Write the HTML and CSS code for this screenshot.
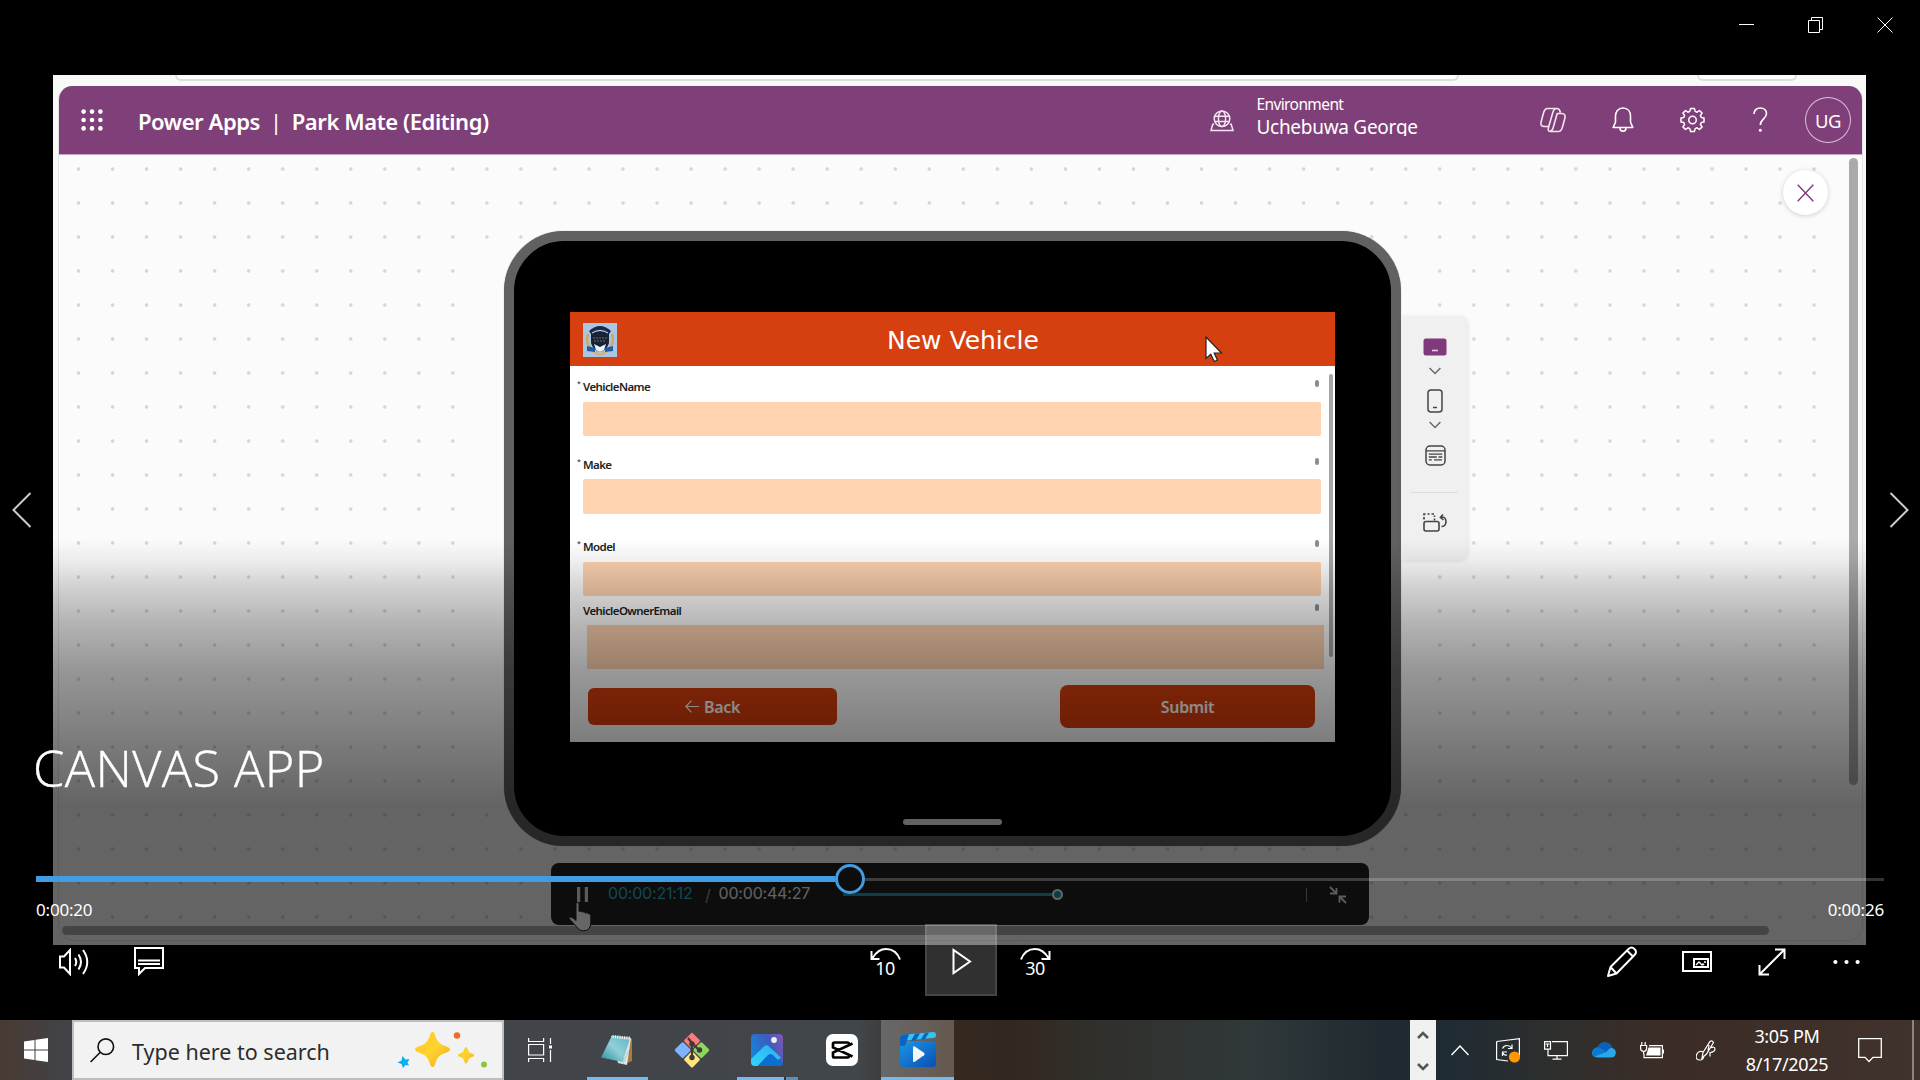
FILE: index.html
```html
<!DOCTYPE html>
<html lang="en">
<head>
<meta charset="utf-8">
<title>Canvas App</title>
<link rel="stylesheet" href="styles.css">
</head>
<body>
<main class="player">
  <section class="video">
    <div class="tabstrip"><span class="tab tab-wide"></span><span class="tab tab-small"></span></div>
    <div class="studio">
      <header class="suite">
        <svg class="waffle" width="22" height="22" viewBox="0 0 22 22" fill="#fff"><circle cx="2.6" cy="2.6" r="2.3"/><circle cx="11" cy="2.6" r="2.3"/><circle cx="19.4" cy="2.6" r="2.3"/><circle cx="2.6" cy="11" r="2.3"/><circle cx="11" cy="11" r="2.3"/><circle cx="19.4" cy="11" r="2.3"/><circle cx="2.6" cy="19.4" r="2.3"/><circle cx="11" cy="19.4" r="2.3"/><circle cx="19.4" cy="19.4" r="2.3"/></svg>
        <div class="brand"><span>Power Apps</span><span class="bar">|</span><span class="file">Park Mate (Editing)</span></div>
        <svg class="globe" width="24" height="22" viewBox="0 0 24 22" fill="none" stroke="#f3e6f1" stroke-width="1.5"><circle cx="12" cy="8.8" r="7.8"/><ellipse cx="12" cy="8.8" rx="3.6" ry="7.8"/><path d="M5 6.2h14M5 11.6h14M4.2 14.2H2.8L1 20.6h22l-1.8-6.4h-1.4"/></svg>
        <div class="env"><span class="env-label">Environment</span><span class="env-name">Uchebuwa George</span></div>
        <nav class="suite-icons">
          <svg width="70" height="30" viewBox="-22 -2 70 30" fill="none" stroke="#f3e6f1" stroke-width="1.6" stroke-linejoin="round"><path d="M7.500 1.500h9.500c2.500 0 2.800 1.500 3.500 4M7.500 1.500C5 1.500 4.200 3.500 3.500 6L1.200 14.500c-.9 3.500.3 5 3 5h4.600L12.800 5.500c.7-2.500 1.700-4 4.200-4M8.800 19.500l-.4 1.500c-.6 2.300.2 3.500 2.100 3.500h8c2.500 0 3.300-2 4-4.500l2.300-8.500c.9-3.500-.3-5-3-5h-4.600l-4 14c-.7 2.500-1.700 4-4.200 4"/></svg>
          <svg width="70" height="30" viewBox="-24 -2 70 30" fill="none" stroke="#fff" stroke-width="1.6" stroke-linejoin="round"><path d="M11 1C6 1 3.500 4.800 3.500 9v6L1.200 20.500h19.600L18.500 15V9c0-4.200-2.500-8-7.500-8zM8 21c0 2 1.200 3.200 3 3.200s3-1.200 3-3.200"/></svg>
          <svg width="69" height="30" viewBox="-34.500 -15 69 30" fill="none" stroke="#fff" stroke-width="1.5" stroke-linejoin="round"><path d="M-1.900-11.500h3.800L2.700-8.600 4.600-7.800 7-9.500 9.600-6.900 7.900-4.500 8.700-2.600 11.500-1.900v3.800L8.700 2.600 7.900 4.500 9.600 6.900 7 9.500 4.600 7.800 2.700 8.600 1.900 11.500h-3.800L-2.700 8.600-4.600 7.800-7 9.500-9.600 6.900-7.900 4.500-8.700 2.600-11.500 1.900v-3.800L-8.700-2.600-7.900-4.500-9.600-6.900-7-9.500-4.600-7.800-2.700-8.600z"/><circle r="3.800"/></svg>
          <svg width="68" height="30" viewBox="-26 -2 68 30" fill="none" stroke="#fff" stroke-width="1.700"><path d="M1 7c0-3.500 2.500-6 6.300-6s6.200 2.300 6.200 5.600c0 5.200-6.200 5.400-6.200 11.400"/><circle cx="7.300" cy="23.300" r=".7"/></svg>
        </nav>
        <span class="avatar">UG</span>
      </header>
      <div class="canvas">
        <div class="tablet">
          <div class="screen">
            <div class="form-head">
              <svg class="crest" width="34" height="34" viewBox="0 0 34 34"><rect width="34" height="34" fill="#a9c6e4"/><path d="M5 11q-3 9 4 16M29 11q3 9-4 16" stroke="#cfa85a" stroke-width="2.400" fill="none"/><path d="M9 28l8 4 8-4" stroke="#d9b365" stroke-width="2" fill="none"/><path d="M6 8Q17-2 28 8l-2 3H8z" fill="#1c2b4d"/><path d="M8 11q9-4 18 0v9q-2 7-9 9-7-2-9-9z" fill="#16243a"/><path d="M9 10q8-5 16 0" stroke="#dfe6ef" fill="none"/><path d="M10 15h14M11 18h12" stroke="#7d6c42" stroke-dasharray="2 1"/><path d="M4 23l8 2v4l-8-1zM30 23l-8 2v4l8-1z" fill="#1f5ca6"/><path d="M11 21l6 3 6-3-2 6-4 2-4-2z" fill="#edf2f7"/></svg>
              <h1>New Vehicle</h1>
            </div>
            <div class="form-body">
              <div class="rows">
                <div class="label"><i>*</i><span>VehicleName</span><b></b></div><div class="field"></div>
                <div class="label l2"><i>*</i><span>Make</span><b></b></div><div class="field f2"></div>
                <div class="label l3"><i>*</i><span>Model</span><b></b></div><div class="field"></div>
                <div class="label l4"><i></i><span>VehicleOwnerEmail</span><b></b></div><div class="field f4"></div>
                <div class="actions">
                  <div class="btn back"><svg width="14" height="13" viewBox="0 0 14 13" fill="none" stroke="#fff" stroke-width="1.100"><path d="M14 6.500H1M6.500.7L.8 6.500l5.700 5.800"/></svg><span>Back</span></div>
                  <div class="btn submit"><span>Submit</span></div>
                </div>
              </div>
              <div class="form-scroll"></div>
            </div>
          </div>
          <div class="homebar"></div>
        </div>
        <aside class="devices">
          <svg width="24" height="18" viewBox="0 0 24 18"><rect x=".5" y=".5" width="23" height="17" rx="2.500" fill="#80397b"/><path d="M9 12.500h6" stroke="#e8cfe5" stroke-width="1.600"/></svg>
          <svg class="chev" width="12" height="8" viewBox="0 0 12 8" fill="none" stroke="#666" stroke-width="1.400"><path d="M.6 1 6 6.500 11.400 1"/></svg>
          <svg class="phone" width="16" height="24" viewBox="0 0 16 24" fill="none" stroke="#444" stroke-width="1.500"><rect x="1" y="1" width="14" height="22" rx="3"/><path d="M6 18.500h4"/></svg>
          <svg class="chev" width="12" height="8" viewBox="0 0 12 8" fill="none" stroke="#666" stroke-width="1.400"><path d="M.6 1 6 6.500 11.400 1"/></svg>
          <svg class="formicon" width="21" height="21" viewBox="0 0 21 21" fill="none" stroke="#444" stroke-width="1.500"><rect x="1" y="1" width="19" height="19" rx="4"/><path d="M1 5.800h19M3.800 9.200h13.500M3.800 12h8M13.500 12h3.800M3.800 14.800h3M9 14.800h8" stroke-width="1.300"/></svg>
          <hr>
          <svg class="rotate" width="24" height="19" viewBox="0 0 24 19" fill="none" stroke="#444" stroke-width="1.600"><rect x="1" y="8.500" width="15" height="9.500" rx="2"/><path d="M1 6.500V4M1 2.500V1h1.500M4.500 1h2M8.500 1H11M11.500 2.500v1.500M11.500 5.500v2"/><path d="M18 4.500c3.500-1 5 1 5 4s-2 5-4.500 5M20 1.500l-2.600 3 3 2.500"/></svg>
        </aside>
        <div class="close-preview"><svg width="17" height="18" viewBox="0 0 17 18" fill="none" stroke="#80397b" stroke-width="1.400"><path d="M.7.7l15.600 16.600M16.300.7.700 17.300"/></svg></div>
        <div class="vscroll"></div>
        <div class="hscroll"></div>
        <div class="recorder">
          <svg class="pause" width="11" height="15" viewBox="0 0 11 15" fill="#e4e4e4"><path d="M0 0h3.200v15H0zM7.800 0H11v15H7.800z"/></svg>
          <span class="rec-now">00:00:21:12</span><span class="rec-slash">/</span><span class="rec-total">00:00:44:27</span>
          <div class="rec-track"></div><i class="rec-knob"></i>
          <div class="rec-divider"></div>
          <svg class="rec-shrink" width="18" height="18" viewBox="0 0 18 18" fill="none" stroke="#e8e8e8" stroke-width="1.800"><path d="M1 1l6 6M7.500 2v5.500H1M17 17l-6-6M10.500 16.500v-6H17"/></svg>
        </div>
        <svg class="arrow-cursor" width="18" height="27" viewBox="0 0 18 27"><path d="M1 1v21.500l4.800-4.300 3.400 7.300 3.200-1.500-3.200-7H16.500z" fill="#fff" stroke="#222" stroke-width="1.200"/></svg>
        <svg class="hand-cursor" width="24" height="31" viewBox="0 0 24 31"><path d="M8 2q2-1.500 3 .5v8q2-1.500 3.200.6 2-1 3.200.9 2-.9 3.200.8 2-.3 2.200 1.700v7q0 8-7.500 8.500-4 0-6.500-4L1 17.500q1-2.500 4-.5l3 2.500z" fill="#fff" stroke="#222" stroke-width="1"/></svg>
      </div>
    </div>
  </section>

  <section class="overlay">
    <div class="window-controls">
      <svg width="69" height="16" viewBox="-27 0 69 16" stroke="#fff" fill="none"><path d="M0 7.500h15"/></svg>
      <svg width="69" height="16" viewBox="-27 0 69 16" stroke="#fff" fill="none"><path d="M.5 3.500h11v12H.5zM3.500 3.500v-3h11v12h-3"/></svg>
      <svg width="69" height="16" viewBox="-27 0 69 16" stroke="#fff" fill="none"><path d="M.5.5l15 15M15.500.5l-15 15"/></svg>
    </div>
    <div class="flip">
      <svg width="20" height="36" viewBox="0 0 20 36" fill="none" stroke="#ccc" stroke-width="2"><path d="M18.500 1 1.500 18l17 17"/></svg>
      <svg width="20" height="36" viewBox="0 0 20 36" fill="none" stroke="#ccc" stroke-width="2"><path d="M1.500 1l17 17-17 17"/></svg>
    </div>
    <h2 class="title">CANVAS APP</h2>
    <div class="seek"><div class="seek-done"></div><i class="thumb"></i><div class="seek-left"></div></div>
    <div class="times"><span>0:00:20</span><span>0:00:26</span></div>
    <div class="controls">
      <div class="group">
        <span><svg width="32" height="28" viewBox="0 0 32 28" fill="none" stroke="#fff" stroke-width="2"><path d="M2 8.500h4L12 2v24l-6-6.500H2z"/><path d="M17 10q2.500 4 0 8M20.500 6.500q5 7.500 0 15M25 2q8.500 12 0 24"/></svg></span>
        <span><svg width="30" height="29" viewBox="0 0 30 29" fill="none" stroke="#fff" stroke-width="2"><path d="M1 1h28v20H11l-6 6v-6H1zM4 13.500h22M4 17h22"/></svg></span>
      </div>
      <div class="group">
        <span class="skip"><svg width="31" height="13" viewBox="0 0 31 13" fill="none" stroke="#fff" stroke-width="2"><path d="M1.500 3v8h8M2.500 10Q8 1 16 1q10 0 14 10.500"/></svg><em>10</em></span>
        <span class="play"><svg width="20" height="27" viewBox="0 0 20 27" fill="none" stroke="#fff" stroke-width="2"><path d="M1.500 2v23L18 13.500z"/></svg></span>
        <span class="skip"><svg width="31" height="13" viewBox="0 0 31 13" fill="none" stroke="#fff" stroke-width="2"><path d="M29.500 3v8h-8M28.500 10Q23 1 15 1 5 1 1 11.500"/></svg><em>30</em></span>
      </div>
      <div class="group right">
        <span><svg width="30" height="31" viewBox="0 0 30 31" fill="none" stroke="#fff" stroke-width="2" stroke-linejoin="round"><path d="M1 30l2.500-9L21.500 3q3-3 6 0t0 6L9.500 27.500zM3.500 21l6 6.500M20 4.500l6 6"/></svg></span>
        <span><svg width="30" height="21" viewBox="0 0 30 21" fill="none" stroke="#fff" stroke-width="2"><path d="M1 1h28v19H1zM12 8h14v8H12z"/><path d="M14 14l3-3 3 3 1-1 1 1M22 11h2" stroke-width="1.300"/></svg></span>
        <span><svg width="28" height="28" viewBox="0 0 28 28" fill="none" stroke="#fff" stroke-width="2"><path d="M1.500 26.500l25-25M17 1.500h9.500V11M1.500 17v9.500H11"/></svg></span>
        <span><svg width="27" height="6" viewBox="0 0 27 6" fill="#fff"><circle cx="2.400" cy="3" r="2.100"/><circle cx="13.500" cy="3" r="2.100"/><circle cx="24.600" cy="3" r="2.100"/></svg></span>
      </div>
    </div>
  </section>
</main>

<footer class="taskbar">
  <div class="start"><svg width="24" height="24" viewBox="0 0 24 24" fill="#fff"><path d="M0 3.400 10.500 1.900v9.600H0zM11.500 1.700 24 0v11.500H11.500zM0 12.500h10.500v9.600L0 20.600zM11.500 12.500H24V24l-12.500-1.700z"/></svg></div>
  <div class="search">
    <svg width="25" height="25" viewBox="0 0 25 25" fill="none" stroke="#111" stroke-width="1.600"><circle cx="15.800" cy="8.700" r="7.800"/><path d="M10.300 14.300.600 24"/></svg>
    <span>Type here to search</span>
    <svg class="stars" width="90" height="40" viewBox="0 0 90 40"><defs><linearGradient id="gold" x1="0" y1="0" x2="1" y2="1"><stop offset="0" stop-color="#ffc51c"/><stop offset=".5" stop-color="#ffd430"/><stop offset="1" stop-color="#f0a818"/></linearGradient></defs><path d="M35.500 2q2 0 3 4.500 2 7 8.500 9 6 2 6 4t-6 4q-6.500 2-8.500 9-1 4.500-3 4.500t-3-4.500q-2-7-8.500-9-6-2-6-4t6-4q6.500-2 8.500-9 1-4.500 3-4.500z" fill="url(#gold)"/><path d="M69 17q1.200 0 2 3 .6 2.500 3 3.300 3.200.7 3.200 2t-3.200 2q-2.400.7-3 3.300-.8 3-2 3t-2-3q-.6-2.600-3-3.300-3.200-.700-3.200-2t3.200-2q2.400-.8 3-3.300.8-3 2-3z" fill="url(#gold)"/><circle cx="60" cy="5.500" r="3.200" fill="#f4682a"/><circle cx="87" cy="34.500" r="3" fill="#8cc63f"/><path d="M5.500 26l3 3.500 4-.5-2 3.500 1.500 3-3.500-.5L6 38l-1.500-4L.500 32.500l4-2z" fill="#0ab0f2"/></svg>
  </div>
  <div class="apps">
    <div class="app taskview"><svg width="24" height="24" viewBox="0 0 24 24" fill="none" stroke="#fff" stroke-width="1.200"><path d="M.6 0v3.500h15V0M.6 6.500h15v10.500H.6zM.6 24v-3.500h15V24M22.500 0v6M22.500 12v12"/><path d="M21 7.500h3v3h-3z" fill="#fff" stroke="none"/></svg></div>
    <div class="app open"><svg width="34" height="32" viewBox="0 0 34 32"><defs><linearGradient id="pad" x1="0" y1="1" x2="1" y2="0"><stop offset="0" stop-color="#2a8a98"/><stop offset=".5" stop-color="#8fd0d9"/><stop offset="1" stop-color="#5fb4c2"/></linearGradient></defs><path d="M29 4l3 1v22l-5 2z" fill="#a97d35"/><path d="M11 2l20 2-4 27-9-2z" fill="#dfe9ec"/><path d="M12 1.500 30 3.500 23 28 1 23.500z" fill="url(#pad)"/><path d="M12.500 2.500l18 1.800" stroke="#eee" stroke-width="3" stroke-dasharray="1.300 1"/><path d="M20 29l9-21M23 30l6-14" stroke="#9fb4ba" stroke-width=".7"/></svg></div>
    <div class="app"><svg width="36" height="36" viewBox="0 0 36 36"><g transform="rotate(45 18 18)"><rect x="5.500" y="5.500" width="12" height="12" rx="1.500" fill="#ff7b79"/><rect x="18.700" y="5.500" width="12" height="12" rx="1.500" fill="#8fd65c"/><rect x="5.500" y="18.700" width="12" height="12" rx="1.500" fill="#80b3ff"/><rect x="18.700" y="18.700" width="12" height="12" rx="1.500" fill="#ffe680"/></g><path d="M14 6l4 5v14M18 11l7 7" stroke="#41393a" stroke-width="2.200" fill="none"/><g fill="#41393a"><circle cx="18" cy="12" r="2.700"/><circle cx="25.500" cy="18" r="2.700"/><circle cx="18" cy="25.500" r="2.700"/></g></svg></div>
    <div class="app open two"><svg width="32" height="32" viewBox="0 0 32 32"><defs><linearGradient id="sky" x1="0" y1=".6" x2="1" y2=".2"><stop offset="0" stop-color="#1683dd"/><stop offset=".6" stop-color="#3c5dbb"/><stop offset="1" stop-color="#7b56b5"/></linearGradient><linearGradient id="hill" x1="0" y1="1" x2="1" y2="0"><stop offset="0" stop-color="#35d4fb"/><stop offset="1" stop-color="#2ab0f3"/></linearGradient></defs><rect width="32" height="32" rx="4" fill="url(#sky)"/><circle cx="23" cy="6" r="2.900" fill="#eee"/><path d="M5 32 17 20q2.500-2.300 5 0l10 9q-.5 3-4 3z" fill="#0b6fd0"/><path d="M0 25 13 12.500q2.500-2.300 5 0L30 23.500l-3 2.500-5-5q-2.500-2-5 0L6.500 32H4q-4 0-4-4z" fill="url(#hill)"/></svg></div>
    <div class="app"><svg width="32" height="32" viewBox="0 0 32 32"><rect width="32" height="32" rx="7" fill="#fff"/><path d="M26.500 9.500 7 18.500V22q0 1.500 1.500 1.500h13Q23 23.500 23.500 21M26.500 22.500 7 13.500V10q0-1.500 1.500-1.500h13Q23 8.500 23.500 11" fill="none" stroke="#000" stroke-width="2.700"/></svg></div>
    <div class="app open active"><svg width="36" height="36" viewBox="0 0 36 36"><defs><linearGradient id="film" x1="0" y1="0" x2="1" y2="1"><stop offset="0" stop-color="#1c96e6"/><stop offset="1" stop-color="#0850b4"/></linearGradient></defs><path d="M0 6q0-3 3-3.300L33 0q3 0 3 3t-3 3L6 8.500 4 15H0z" fill="#34c3f3"/><path d="M0 6q0-3 3-3.300l6-.6L5 14.500H0zM15 1.700l5-.5-4 7-5 .5zM25 .8l4-.4-4 6.500-4 .4z" fill="#0b62c0"/><path d="M0 13q1 2 4.500 1.500L7 9h26q3 0 3 3v20q0 3-3 3H3q-3 0-3-3z" fill="url(#film)"/><path d="M13 15.500q0-2 1.800-1L24 20.800q1.500 1.200 0 2.400l-9.200 6.500q-1.800 1-1.800-1z" fill="#f5f5f5"/></svg></div>
  </div>
  <div class="spinner"><svg width="12" height="10" viewBox="0 0 12 10" fill="none" stroke="#555" stroke-width="2.600"><path d="M1 8l5-5 5 5"/></svg><svg width="12" height="10" viewBox="0 0 12 10" fill="none" stroke="#555" stroke-width="2.600"><path d="M1 2l5 5 5-5"/></svg></div>
  <div class="tray">
    <span><svg width="18" height="11" viewBox="0 0 18 11" fill="none" stroke="#fff" stroke-width="1.400"><path d="M.5 10 9 1l8.500 9"/></svg></span>
    <span><svg width="24" height="25" viewBox="0 0 24 25" fill="none" stroke="#fff" stroke-width="1.200"><path d="M.6 3.500 23.400.700v17.500M.6 3.500v18L12 23M6.500 10.500Q8 7.500 11 7.500q3 0 4.500 2.500M16 6.500v4h-4M11 14H6.500v4M6.500 14.500Q8 18 11 17"/><circle cx="18.500" cy="19" r="5.600" fill="#ff9800" stroke="none"/></svg></span>
    <span><svg width="24" height="19" viewBox="0 0 24 19" fill="none" stroke="#fff" stroke-width="1.200"><path d="M8 .600h15.400v14H4V8.500M.600.600H6.500v7.500H.600zM3.500 3v3M1.500 3h4M13 14.600V18M8.500 18.200h9"/></svg></span>
    <span><svg width="24" height="16" viewBox="0 0 24 16"><path d="M5.500 15.500Q0 15 .2 10.500.8 6 5.500 5.500 8 .300 13 .5q5.500.300 7 5.500Q24 7 23.800 11q-.5 4.500-5 4.500z" fill="#28a8ea"/><path d="M.2 10.500Q.8 6 5.500 5.500q3 0 5 2l4 2.500L2.500 14.500Q.2 13 .2 10.500z" fill="#0f78d0"/><path d="M5.500 5.500Q8 .300 13 .5q5.500.300 7 5.500-3-.3-5.500 4L10 7.200q-2-1.700-4.500-1.700z" fill="#0a5fb8"/></svg></span>
    <span><svg width="24" height="17" viewBox="0 0 24 17" fill="none" stroke="#fff" stroke-width="1.200"><path d="M9 3.600h13.400v12H4v-4M23.500 7.500v4M1.800 0v3M5.200 0v3M.6 3.500h6v3q0 2.500-3 3-3-.5-3-3zM3.600 9.500V12"/><path d="M8.500 5.500h12v8H6z" fill="#fff" stroke="none"/></svg></span>
    <span class="pen"><svg width="20" height="21" viewBox="0 0 20 21" fill="none" stroke="#fff" stroke-width="1.200"><path d="M6 18 7 12.500 14 1.500q2-1.500 3.500 1L10.500 14zM8 12q-6-2-7.500 3T4 20q3.500 0 4-4.500M13 5l-1 5.500M14 8q5-2 5 1t-5 3.500v4"/></svg></span>
    <div class="clock"><span class="t">3:05 PM</span><span class="d">8/17/2025</span></div>
    <span class="notif"><svg width="24" height="25" viewBox="0 0 24 25" fill="none" stroke="#fff" stroke-width="1.300"><path d="M.700.700h22.600v18.600H15L11 23.500 7 19.300H.700z"/></svg></span>
    <i class="peek"></i>
  </div>
</footer>
</body>
</html>
```
FILE: styles.css
```css
* { box-sizing: border-box; }
body { margin: 0; width: 1920px; height: 1080px; overflow: hidden; background: #000; color: #fff; font-family: "Noto Sans", "Open Sans", sans-serif; }
svg { display: block; flex: none; }
span, h1, h2 { white-space: nowrap; }
h1, h2 { margin: 0; font-weight: 400; }

/* video frame */
.player { position: relative; height: 1020px; padding: 75px 54px 0 53px; background: #000; }
.video { height: 870px; background: #f9f9f8; overflow: hidden; }
.tabstrip { height: 11px; display: flex; }
.tab { height: 6px; border: 2px solid #dcdfdd; border-top: 0; border-radius: 0 0 14px 14px; background: #fff; }
.tab-wide { width: 1284px; margin-left: 122px; }
.tab-small { width: 100px; margin-left: 238px; }
.studio { height: 855px; margin: 0 3px 0 5px; border: solid #e4e4e4; border-width: 0 1px 1px; border-radius: 14px 14px 16px 16px; overflow: hidden; background: #fbfbfb; }

.suite { height: 69px; background: #7f3f78; border-bottom: 1px solid #c9a5c6; display: flex; align-items: center; padding-right: 11px; }
.waffle { margin-left: 22px; }
.brand { width: 1074px; margin-left: 35px; display: flex; font-size: 22px; font-weight: 600; line-height: 30px; letter-spacing: -.42px; padding-top: 2px; }
.bar { margin: 0 10px; font-weight: 400; }
.globe { margin-bottom: -1px; }
.env { width: 262px; margin-left: 22px; display: flex; flex-direction: column; }
.env-label { font-size: 15.500px; line-height: 22px; letter-spacing: -.6px; }
.env-name { font-size: 19px; line-height: 24px; height: 21px; overflow: hidden; letter-spacing: -.28px; margin-bottom: 11px; }
.suite-icons { display: flex; margin-left: auto; }
.avatar { width: 46px; height: 46px; margin-left: 10px; border: 1.500px solid #dcbfd9; border-radius: 50%; text-align: center; line-height: 45px; font-size: 18.500px; letter-spacing: -.5px; }

/* dot grid, left blank beside the device and along the right edge */
.canvas { position: relative; height: 786px; display: flex; align-items: flex-start; padding: 76px 0 0 445px; background: linear-gradient(#fbfbfb, #fbfbfb) right top / 28px 100% no-repeat, linear-gradient(#fbfbfb, #fbfbfb) 411px 96px / 950px 550px no-repeat, radial-gradient(circle, #d6d6d6 1.300px, transparent 2.200px) 2.500px -3px / 34.040px 34px; }
.tablet { width: 897px; height: 615px; flex: none; border: 10px solid #616161; border-radius: 60px; background: #000; padding: 71px 0 0 56px; box-shadow: 0 0 1px #888; }
.screen { width: 765px; height: 430px; background: #fff; color: #222; }
.form-head { height: 54px; background: #d64011; display: flex; align-items: center; padding: 1px 0 0 13px; }
.form-head h1 { margin-left: 270px; padding-top: 1px; font-family: "DejaVu Sans", sans-serif; font-size: 25px; letter-spacing: 0; color: #fff; }
.form-body { display: flex; align-items: flex-start; }
.rows { width: 759px; padding: 11px 0 0 13px; }
.label { height: 18px; display: flex; align-items: flex-start; font-size: 11.500px; font-weight: 600; line-height: 19px; letter-spacing: -.6px; }
.label i { width: 6px; margin-left: -6px; font-size: 7px; line-height: 14px; font-style: normal; font-weight: 400; }
.label b { width: 4px; height: 7px; margin: 3px 10px 0 auto; border-radius: 2px; background: #8d8d8d; }
.field { width: 738px; height: 34px; margin-top: 7px; border-radius: 2px; background: #ffd3b0; }
.l2 { margin-top: 19px; }
.f2 { height: 35px; margin-top: 6px; }
.l3 { margin-top: 23px; }
.l4 { margin-top: 5px; }
.f4 { height: 44px; width: 737px; margin: 6px 0 0 4px; border-radius: 0; }
.actions { display: flex; align-items: center; justify-content: space-between; width: 727px; height: 43px; margin: 16px 0 0 5px; }
.btn { display: flex; align-items: center; justify-content: center; gap: 5px; color: #fff; background: #d63d0c; font-size: 16px; font-weight: 600; letter-spacing: -.35px; }
.btn span { padding-top: 1px; }
.back { width: 249px; height: 37px; border-radius: 6px; margin-bottom: 1px; }
.submit { width: 255px; height: 43px; border-radius: 8px; }
.form-scroll { width: 4px; height: 283px; margin-top: 8px; border-radius: 2px; background: #a6a6a6; }
.homebar { width: 99px; height: 6px; margin: 77px 0 0 333px; border-radius: 3px; background: #f5f5f5; }

.devices { width: 66px; height: 244px; margin-top: 85px; padding-top: 22px; border-radius: 0 8px 8px 0; background: #f0f0f0; box-shadow: 1px 1px 4px rgba(0,0,0,.1); display: flex; flex-direction: column; align-items: center; }
.devices > svg { margin-left: 2px; }
.devices .chev { margin-top: 11px; }
.devices .phone { margin-top: 14px; }
.devices .phone + .chev { margin-top: 8px; }
.devices .formicon { margin-top: 16px; }
.devices hr { width: 47px; height: 1px; margin: 26px 0 0; border: 0; background: #ddd; }
.devices .rotate { margin-top: 20px; }

/* items floating over the design canvas */
.close-preview { position: absolute; left: 1724px; top: 15px; width: 45px; height: 45px; border-radius: 50%; background: #fff; box-shadow: 0 1px 5px rgba(0,0,0,.18); display: grid; place-items: center; }
.vscroll { position: absolute; left: 1790px; top: 3px; width: 9px; height: 627px; border-radius: 5px; background: #aaa; }
.hscroll { position: absolute; left: 3px; top: 771px; width: 1707px; height: 9px; border-radius: 5px; background: #aaa; }
.recorder { position: absolute; left: 492px; top: 708px; width: 818px; height: 62px; border-radius: 8px; background: #202121; display: flex; align-items: center; padding: 1px 22px 0 26px; font-family: Inter, sans-serif; font-size: 16px; letter-spacing: -.2px; }
.recorder > * { flex: none; }
.rec-now { width: 84px; margin-left: 20px; color: #24b6cd; margin-top: -3px; }
.rec-slash { margin-left: 13px; color: #999; }
.rec-total { width: 90px; margin-left: 8px; color: #f4f4f4; margin-top: -3px; }
.rec-track { width: 209px; height: 3px; margin-left: 34px; background: #1c9fb6; }
.rec-knob { width: 11px; height: 11px; border: 2.500px solid #fff; border-radius: 50%; background: #1a9ab0; }
.rec-divider { width: 1px; height: 14px; margin-left: auto; background: #888; }
.rec-shrink { margin-left: 22px; }
.arrow-cursor { position: absolute; left: 1146px; top: 181px; }
.hand-cursor { position: absolute; left: 509px; top: 746px; }

/* player overlay */
.overlay { position: absolute; inset: 0; display: flex; flex-direction: column; background: linear-gradient(transparent 538px, rgba(0,0,0,.06) 560px, rgba(0,0,0,.18) 590px, rgba(0,0,0,.29) 625px, rgba(0,0,0,.4) 669px, rgba(0,0,0,.51) 742px, rgba(0,0,0,.6) 805px); }
.window-controls { height: 48px; padding: 17px 1px 0 0; display: flex; justify-content: flex-end; }
.window-controls svg { width: 69px; }
.flip { height: 36px; margin: 444px 11px 0 12px; display: flex; justify-content: space-between; }
.title { margin: 210px 0 0 33px; font-family: "Open Sans", "Noto Sans", sans-serif; font-size: 50.500px; line-height: 60px; font-weight: 300; letter-spacing: .4px; -webkit-text-stroke: .4px #fff; }
.seek { height: 30px; margin: 66px 36px 0; display: flex; align-items: center; }
.seek-done { width: 799px; height: 6px; background: #429ce3; }
.thumb { width: 30px; height: 30px; border: 3px solid #429ce3; border-radius: 50%; }
.seek-left { flex: 1; height: 3px; background: rgba(255,255,255,.2); }
.times { height: 30px; padding: 1px 36px 0; display: flex; justify-content: space-between; font-size: 17px; line-height: 30px; letter-spacing: -.2px; }
.controls { height: 72px; padding: 0 36px; display: grid; grid-template-columns: 1fr 225px 1fr; }
.group { height: 72px; display: flex; align-items: center; }
.group > span { width: 75px; height: 72px; padding-top: 3px; flex: none; display: flex; flex-direction: column; align-items: center; justify-content: center; }
.group.right { justify-content: flex-end; }
.group > .play { width: 72px; margin: 0 1px 0 2px; padding: 3px 0 0 2px; background: rgba(255,255,255,.19); border: 2px solid rgba(255,255,255,.1); }
.skip em { font-style: normal; font-size: 18px; line-height: 14px; height: 14px; letter-spacing: -.5px; }

/* taskbar */
.taskbar { height: 60px; display: flex; background: linear-gradient(90deg, #483a33 0, #41444a 75px, #41464a 860px, #35291f 930px, #33281f 1010px, #30302c 1100px, #30383a 1250px, #1f2a30 1385px, #1f2b33 1450px, #2f2f2d 1560px, #3c2c26 1670px, #40322c 1914px); }
.start { width: 72px; display: grid; place-items: center; }
.search { width: 432px; border: 2px solid #bdbdbd; background: #f2f2f2; color: #2c2c2c; display: flex; align-items: center; padding-left: 16px; font-size: 21.500px; letter-spacing: 0; }
.search span { margin-left: 17px; padding-top: 2px; }
.stars { margin-left: auto; margin-right: 15px; }
.apps { display: flex; }
.app { width: 75px; position: relative; display: grid; place-items: center; }
.taskview { padding-right: 4px; }
.open::after { content: ""; position: absolute; left: 8px; bottom: 0; width: 61px; height: 3px; background: #76b9ed; }
.two::after { background: linear-gradient(90deg, #76b9ed 47px, #333 47px, #333 49px, #5c90ba 49px); }
.active { width: 73px; margin-left: 2px; background: linear-gradient(90deg, #686868, #65584f); }
.active::after { left: 0; width: 73px; }
.spinner { width: 26px; margin-left: 456px; background: #f0f0f0; display: flex; flex-direction: column; align-items: center; justify-content: space-between; padding: 10px 0 8px; }
.tray { display: flex; flex: 1; }
.tray > span { width: 48px; display: grid; place-items: center; }
.tray > .pen { width: 60px; }
.clock { width: 102px; display: flex; flex-direction: column; align-items: center; padding-top: 2px; font-size: 18px; line-height: 28px; letter-spacing: -.35px; }
.tray > .notif { width: 64px; }
.peek { width: 2px; margin-left: 10px; background: #8c8480; }
```
